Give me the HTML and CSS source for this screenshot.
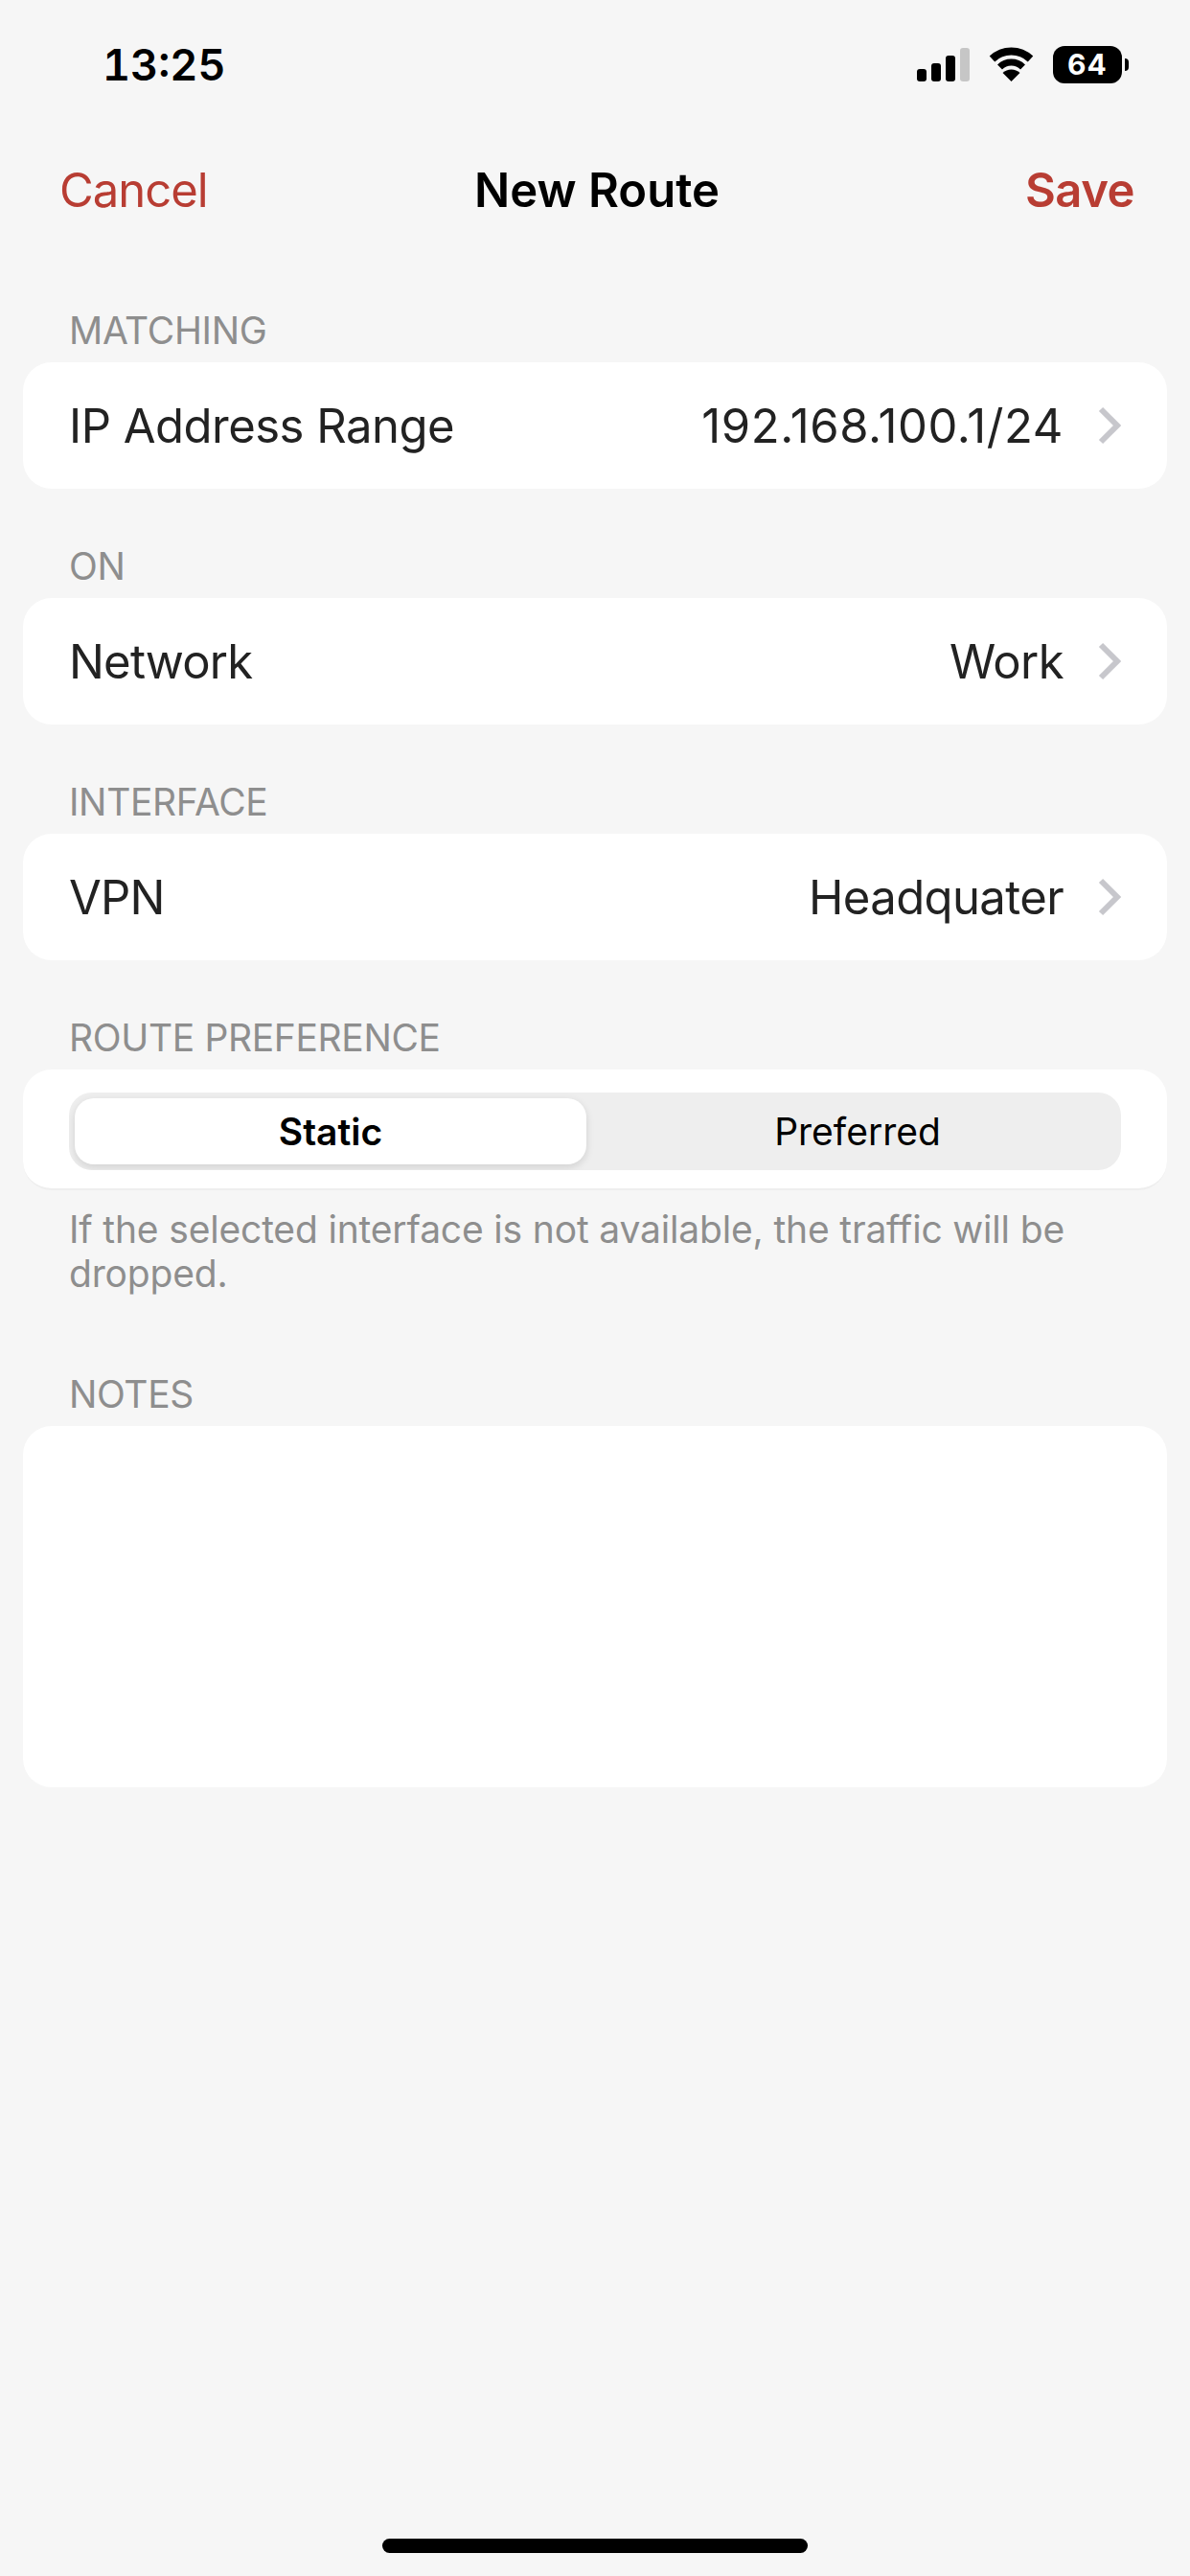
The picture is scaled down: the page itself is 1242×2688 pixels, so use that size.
FILE: index.html
```html
<!DOCTYPE html>
<html lang="en">
<head>
<meta charset="utf-8">
<title>New Route</title>
<link rel="stylesheet" href="styles.css">
</head>
<body>
<div class="screen">
  <div class="status">
    <span class="time">13:25</span>
    <div class="status-icons">
      <div class="signal">
        <span class="bar b1"></span><span class="bar b2"></span><span class="bar b3"></span><span class="bar b4"></span>
      </div>
      <svg class="wifi" viewBox="0 0 47 36" width="47" height="36">
        <path d="M3.5 12.5A29 29 0 0 1 43.5 12.5" fill="none" stroke="#000" stroke-width="8"/>
        <path d="M11.5 21A17 17 0 0 1 35.5 21" fill="none" stroke="#000" stroke-width="7"/>
        <path d="M23.5 36L14.5 27A13 13 0 0 1 32.5 27Z" fill="#000"/>
      </svg>
      <div class="battery"><span class="battery-body">64</span><span class="battery-nub"></span></div>
    </div>
  </div>
  <div class="nav">
    <span class="nav-btn">Cancel</span>
    <span class="nav-title">New Route</span>
    <span class="nav-btn nav-save">Save</span>
  </div>
  <section class="group group-first">
    <h2 class="group-label">MATCHING</h2>
    <div class="card row"><span class="title-wide">IP Address Range</span><span class="value value-num">192.168.100.1/24</span><svg class="chev" viewBox="0 0 24 40" width="24" height="40"><path d="M3 3L20 20L3 37" fill="none" stroke="#c7c7cc" stroke-width="6"/></svg></div>
  </section>
  <section class="group">
    <h2 class="group-label">ON</h2>
    <div class="card row"><span>Network</span><span class="value">Work</span><svg class="chev" viewBox="0 0 24 40" width="24" height="40"><path d="M3 3L20 20L3 37" fill="none" stroke="#c7c7cc" stroke-width="6"/></svg></div>
  </section>
  <section class="group">
    <h2 class="group-label">INTERFACE</h2>
    <div class="card row"><span>VPN</span><span class="value">Headquater</span><svg class="chev" viewBox="0 0 24 40" width="24" height="40"><path d="M3 3L20 20L3 37" fill="none" stroke="#c7c7cc" stroke-width="6"/></svg></div>
  </section>
  <section class="group">
    <h2 class="group-label">ROUTE PREFERENCE</h2>
    <div class="card seg-card">
      <div class="segmented">
        <span class="seg seg-on">Static</span>
        <span class="seg seg-off">Preferred</span>
      </div>
    </div>
    <p class="footnote">If the selected interface is not available, the traffic will be dropped.</p>
  </section>
  <section class="group notes-group">
    <h2 class="group-label">NOTES</h2>
    <div class="card notes"></div>
  </section>
  <div class="home-wrap"><div class="home"></div></div>
</div>
</body>
</html>
```
FILE: styles.css
```css
* { box-sizing: border-box; }
html, body { margin: 0; padding: 0; }
body { width: 1242px; height: 2688px; overflow: hidden; background: #f6f6f6; font-family: Inter, "Liberation Sans", sans-serif; color: #222; }
.screen { width: 1242px; height: 2688px; display: flex; flex-direction: column; }

.status { height: 165px; padding: 44px 64px 0 107px; display: flex; justify-content: space-between; align-items: flex-start; flex: none; }
.time { font-size: 45px; line-height: 48px; font-weight: 600; color: #000; letter-spacing: 0; font-variant-numeric: tabular-nums; }
.status-icons { display: flex; align-items: flex-start; padding-top: 4px; }
.signal { display: flex; gap: 5px; align-items: flex-end; height: 36px; margin-top: 1px; margin-right: 20px; }
.bar { width: 10px; border-radius: 3px; background: #000; }
.b1 { height: 13px; }
.b2 { height: 19px; }
.b3 { height: 27px; }
.b4 { height: 35px; background: #c6c6c6; }
.wifi { display: block; margin-right: 20px; margin-top: 1px; }
.battery { display: flex; align-items: center; gap: 3px; }
.battery-body { width: 72px; height: 39px; border-radius: 12px; background: #000; color: #fff; font-size: 30px; line-height: 39px; font-weight: 700; text-align: center; letter-spacing: 1px; }
.battery-nub { width: 4px; height: 13px; border-radius: 0 4px 4px 0; background: #000; }

.nav { height: 66px; padding: 0 58px 0 62px; display: grid; grid-template-columns: 1fr auto 1fr; align-items: center; flex: none; font-size: 49px; }
.nav-btn { color: #b83d33; letter-spacing: -1px; }
.nav-save { font-weight: 600; justify-self: end; letter-spacing: -0.5px; }
.nav-title { font-weight: 600; color: #000; letter-spacing: 0; }

.group { margin: 0 24px; flex: none; padding-top: 57px; }
.group-first { padding-top: 90px; }
.group-label { margin: 0 0 9px 48px; font-size: 39px; line-height: 48px; font-weight: 400; color: #8e8e8e; letter-spacing: -0.35px; }
.card { background: #fff; border-radius: 30px; }
.row { height: 132px; display: flex; align-items: center; padding: 0 48px; font-size: 49px; color: #222; letter-spacing: -0.8px; }
.title-wide { letter-spacing: -0.5px; }
.row .value { margin-left: auto; margin-right: 36px; letter-spacing: -0.6px; }
.row .value-num { letter-spacing: 0.6px; }
.chev { display: block; flex: none; }
.seg-card { height: 126px; padding: 24px 48px 0; border-bottom: 2px solid #eeeeee; }
.segmented { height: 81px; background: #eeeeee; border-radius: 24px; display: grid; grid-template-columns: 540px 1fr; font-size: 39px; color: #000; overflow: hidden; }
.seg { display: flex; align-items: center; justify-content: center; }
.seg-on { margin: 6px 0 6px 6px; background: #fff; border-radius: 20px; font-weight: 600; box-shadow: 0 3px 8px rgba(0,0,0,.12); }
.seg-off { padding-left: 8px; }
.footnote { margin: 18px 48px 0; font-size: 39px; line-height: 46px; color: #8e8e8e; letter-spacing: -0.17px; }
.notes-group { padding-top: 79px; }
.notes { height: 377px; }
.home-wrap { flex: 1; display: flex; align-items: flex-end; justify-content: center; padding-bottom: 24px; }
.home { width: 444px; height: 15px; border-radius: 8px; background: #000; }
```
